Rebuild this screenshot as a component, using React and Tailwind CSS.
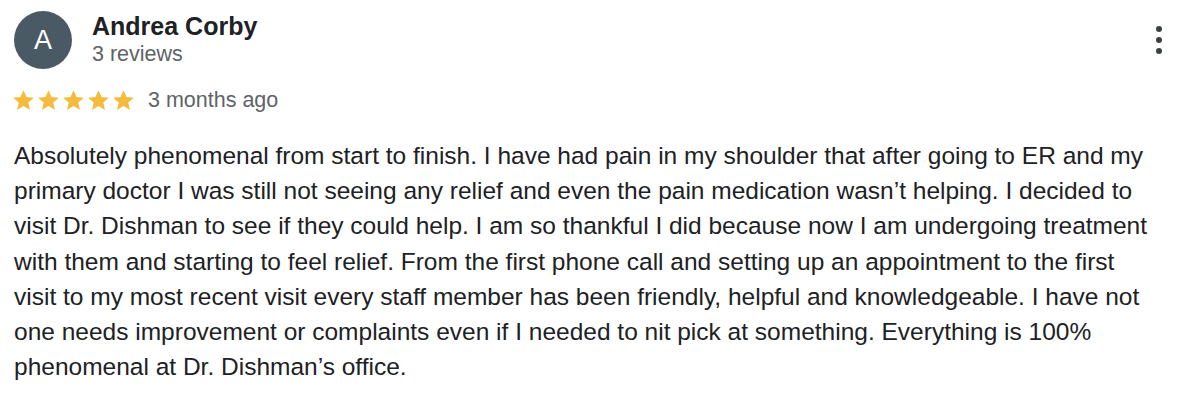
const lines = [
  "Absolutely phenomenal from start to finish. I have had pain in my shoulder that after going to ER and my",
  "primary doctor I was still not seeing any relief and even the pain medication wasn\u2019t helping. I decided to",
  "visit Dr. Dishman to see if they could help. I am so thankful I did because now I am undergoing treatment",
  "with them and starting to feel relief. From the first phone call and setting up an appointment to the first",
  "visit to my most recent visit every staff member has been friendly, helpful and knowledgeable. I have not",
  "one needs improvement or complaints even if I needed to nit pick at something. Everything is 100%",
  "phenomenal at Dr. Dishman\u2019s office.",
];

const Star = () => (
  <svg width="21" height="20" viewBox="2 2 20 19.2">
    <path
      d="M12 2.2l2.9 6.6 7.1.6-5.4 4.7 1.6 7-6.2-3.7-6.2 3.7 1.6-7L2 9.4l7.1-.6z"
      fill="#f4bc3f"
    />
  </svg>
);

const App = () => {
  return (
    <div
      className="w-[1200px] h-[400px] bg-white overflow-hidden text-[#202124]"
      style={{ fontFamily: '"Liberation Sans", Arial, sans-serif' }}
    >
      <div className="flex items-start pl-[14px] pr-[38px] pt-[11px]">
        <div className="w-[58px] h-[58px] rounded-full bg-[#4a5a65] flex items-center justify-center text-white text-[27px] font-light">
          A
        </div>
        <div className="ml-[20px] flex-1">
          <div className="text-[25px] font-bold leading-[28px] mt-[1px]">Andrea Corby</div>
          <div className="text-[21.5px] leading-[26px] text-[#5f6368] mt-[1px]">3 reviews</div>
        </div>
        <div className="flex flex-col gap-[5px] mt-[15px]">
          <span className="w-[6px] h-[6px] rounded-full bg-[#3c4043]" />
          <span className="w-[6px] h-[6px] rounded-full bg-[#3c4043]" />
          <span className="w-[6px] h-[6px] rounded-full bg-[#3c4043]" />
        </div>
      </div>
      <div className="flex items-center h-[24px] pl-[13px] mt-[19px]">
        <div className="flex gap-[4px]">
          <Star />
          <Star />
          <Star />
          <Star />
          <Star />
        </div>
        <span className="ml-[14px] text-[21.5px] leading-[24px] text-[#5f6368]">3 months ago</span>
      </div>
      <div className="pl-[14px] mt-[26px] text-[24.5px] leading-[35.2px] text-[#202124]">
        {lines.map((l, i) => (
          <div key={i} className="whitespace-nowrap">{l}</div>
        ))}
      </div>
    </div>
  );
};

export default App;
